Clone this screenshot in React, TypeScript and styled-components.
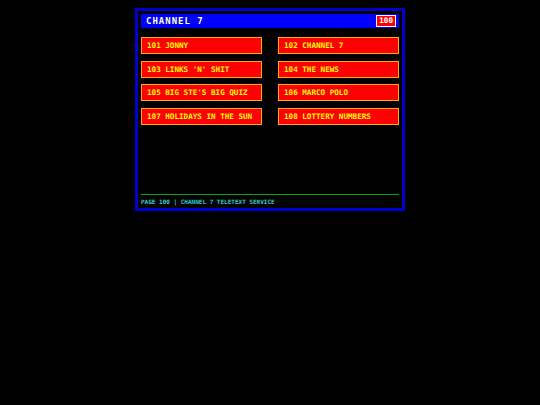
import styled, { createGlobalStyle } from "styled-components";

const GlobalStyle = createGlobalStyle`
  html, body {
    margin: 0;
    padding: 0;
    background: #000;
  }
`;

const Screen = styled.div`
  box-sizing: border-box;
  width: 270px;
  height: 203px;
  margin: 8px auto 0;
  border: 3px solid #0000cc;
  padding: 3px;
  background: #000;
  display: flex;
  flex-direction: column;
  font-family: "DejaVu Sans Mono", "Liberation Mono", monospace;
  font-weight: bold;
`;

const Header = styled.div`
  height: 14px;
  background: #0000ff;
  display: flex;
  align-items: center;
  justify-content: space-between;
  padding: 0 3px 0 5px;
`;

const Title = styled.span`
  color: #ffffcc;
  font-size: 9px;
  letter-spacing: 1px;
`;

const PageBadge = styled.span`
  box-sizing: border-box;
  height: 12px;
  padding: 0 2px;
  background: #ff0000;
  border: 1px solid #ffffff;
  color: #ffffff;
  font-size: 7.6px;
  line-height: 10px;
`;

const Menu = styled.div`
  display: grid;
  grid-template-columns: 121px 121px;
  justify-content: space-between;
  row-gap: 6.5px;
  margin-top: 9px;
`;

const MenuItem = styled.div`
  box-sizing: border-box;
  height: 17px;
  background: #ff0000;
  border: 1px solid #ffaa00;
  color: #ffff00;
  font-size: 7.6px;
  display: flex;
  align-items: center;
  padding-left: 5px;
  white-space: nowrap;
`;

const Spacer = styled.div`
  flex: 1;
`;

const Footer = styled.div`
  border-top: 1px solid #00aa00;
  padding-top: 3px;
  height: 7px;
  color: #33cccc;
  font-size: 6px;
  line-height: 7px;
  white-space: nowrap;
`;

const items = [
  "101 JONNY",
  "102 CHANNEL 7",
  "103 LINKS 'N' SHIT",
  "104 THE NEWS",
  "105 BIG STE'S BIG QUIZ",
  "106 MARCO POLO",
  "107 HOLIDAYS IN THE SUN",
  "108 LOTTERY NUMBERS",
];

export default function App() {
  return (
    <>
      <GlobalStyle />
      <Screen>
        <Header>
          <Title>CHANNEL 7</Title>
          <PageBadge>100</PageBadge>
        </Header>
        <Menu>
          {items.map((item) => (
            <MenuItem key={item}>{item}</MenuItem>
          ))}
        </Menu>
        <Spacer />
        <Footer>PAGE 100 | CHANNEL 7 TELETEXT SERVICE</Footer>
      </Screen>
    </>
  );
}
